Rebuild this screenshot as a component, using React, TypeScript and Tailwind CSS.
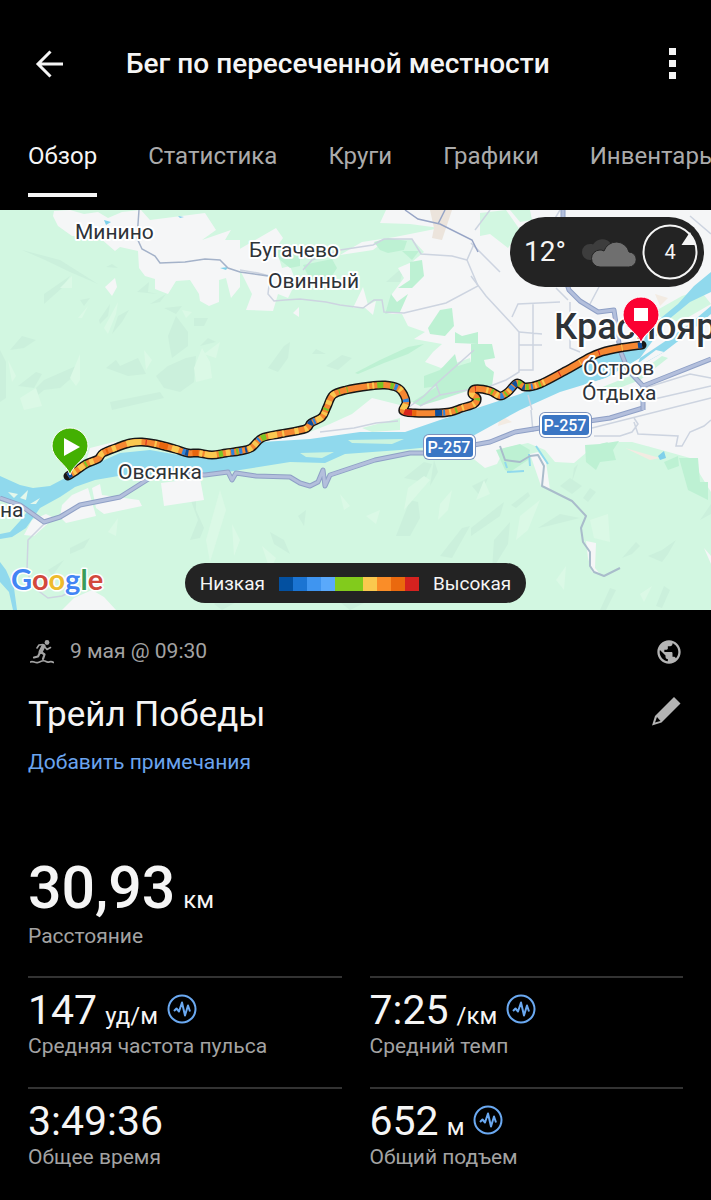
import React, { useState } from 'react';
import { MdPublic } from 'react-icons/md';

const TABS = ['Обзор', 'Статистика', 'Круги', 'Графики', 'Инвентарь'];

const STATS = [
  { value: '147', unit: 'уд/м', label: 'Средняя частота пульса', chart: true },
  { value: '7:25', unit: '/км', label: 'Средний темп', chart: true },
  { value: '3:49:36', unit: '', label: 'Общее время', chart: false },
  { value: '652', unit: 'м', label: 'Общий подъем', chart: true },
];

const URBAN = [
  '54,1 53,6 58,16 72,26 100,28 115,41 120,37 138,41 139,58 145,66 155,69 155,79 168,84 176,71 190,70 199,84 200,91 209,96 219,92 219,70 226,68 231,88 240,77 240,30 225,30 231,20 202,30 216,20 205,3 150,10 141,0 122,2 108,8 98,2 84,4 70,0',
  '105,77 115,68 117,77 112,86',
  '238,40 276,18 283,28 276,38 282,58 290,56 296,72 288,88 278,84 273,101 246,100 252,84 240,60',
  '386,0 380,13 410,14 440,18 395,27 362,32 340,45 373,40 386,30 412,29 424,42 412,52 398,58 404,68 392,84 385,104 402,104 408,116 425,122 414,129 442,134 433,142 425,152 441,158 470,148 474,168 440,178 422,187 404,196 372,188 352,204 330,214 310,222 262,229 250,232 320,231 440,222 470,246 485,258 497,254 505,238 528,233 545,240 555,252 574,253 587,242 600,248 607,246 615,232 632,232 665,241 690,248 711,282 711,0',
  '353,98 363,77 368,95 376,91 373,105 364,97',
  '293,103 299,97 299,107',
  '90,238 118,231 106,242 96,250 86,252',
  '161,273 200,268 204,290 164,296',
  '62,295 72,285 88,278 96,306 66,313 60,307',
  '24,325 32,310 46,304 54,308 34,326',
  '92,278 100,274 102,285 139,290 142,296 104,304 96,298',
  '586,331 596,333 595,358 600,364 592,362 588,348',
  '62,400 74,388 92,380 104,387 116,400',
  '704,338 711,346 711,354',
];

const WOODS = [
  '374,32 388,28 407,31 404,40 388,43 380,40',
  '402,41 419,41 412,50',
  '410,52 422,50 424,66 412,78 398,78 410,70',
  '391,84 397,92 408,84 400,102 385,104',
  '428,118 440,100 452,98 454,116 445,126 430,124',
  '455,122 462,126 478,122 478,134 455,133',
  '273,38 284,40 300,42 300,56 290,58 280,50',
  '303,55 332,49 337,58 328,72 312,74',
  '355,163 380,150 408,137 424,134 408,144 384,153 358,164',
  '424,166 440,160 455,144 458,156 478,150 494,162 492,176 470,180 440,190 420,196 412,192 438,176 424,178',
  '471,134 492,134 495,148 484,150 488,164 471,170',
  '585,235 600,234 619,231 613,240 616,250 600,252 596,260 586,252',
  '679,248 698,248 700,272 708,272 708,290 688,280',
  '664,252 678,246 679,256 668,260',
  '600,244 608,232 600,234',
  '496,240 520,234 530,240 528,250 510,262 505,260',
];

const WOODS_LIGHT = [
  '480,3 506,0 520,20 508,38 490,24 480,26',
  '510,0 530,0 532,10 520,12',
  '362,218 400,208 400,220 372,222',
  '650,104 682,86 700,80 711,94 680,112',
  '586,262 640,240 650,236 620,252',
];

const SHADE = [
  '22,40 60,50 98,74 70,62 45,50',
  '44,84 70,66 62,78 44,94',
  '80,90 90,88 84,96',
  '99,110 110,94 108,106 100,114',
  '112,124 118,106 129,100 122,112',
  '137,82 149,72 148,82 158,84',
  '106,57 112,54 118,58',
  '10,140 22,126 36,130 24,138',
  '28,186 44,170 76,156 78,150 76,164 60,178 44,180 34,188',
  '18,176 36,162 42,164 34,178',
  '106,158 116,150 120,156 138,148 146,164 128,166',
  '156,166 168,156 186,148 196,146 194,172 180,182 164,178',
  '168,126 176,106 188,122 188,136 172,148 170,138',
  '194,108 208,108 204,116 194,116',
  '200,136 208,128 216,132',
  '110,192 160,182 164,188 112,200',
  '150,94 166,84 160,92',
  '164,98 182,96 176,104',
  '0,140 6,152 6,188 0,192',
  '326,156 342,145 352,148 338,160',
  '268,158 284,136 290,132 288,148 278,162',
  '312,144 316,139 326,144',
  '386,72 404,56 400,72',
  '396,326 410,290 418,292 420,308 410,326',
  '404,268 424,252 432,254 424,272',
  '270,322 284,330 290,344 274,334',
  '298,306 306,300 304,316',
  '430,276 434,250 438,262',
  '440,346 462,318 470,316 452,348',
  '190,288 196,280 196,300 204,318 200,328 190,330 198,310',
  '511,295 528,282 530,286 516,298',
  '560,276 570,268 582,276 572,284',
  '583,288 590,278 596,282 588,292',
  '492,360 494,330 510,312 508,334',
  '538,318 560,304 580,308 548,316',
  '622,348 636,332 640,336 632,344',
  '648,346 662,340 676,330 668,344 662,352',
  '471,318 504,292 500,306 471,326',
  '574,258 578,254 572,272',
  '472,276 488,268 480,286',
  '70,338 90,328 84,338 70,344',
  '48,360 64,350 52,366',
  '700,310 711,294 711,304',
  '600,400 610,378 616,380 606,400',
  '656,396 664,376 670,380 662,398',
  '340,392 360,380 378,386 350,400',
  '214,394 236,376 240,390 222,400',
];

const GLOW = [
  '60,78 72,66 72,78',
  '78,108 88,96 82,108',
  '104,118 118,92 116,104 108,124',
  '70,168 80,144 80,170 76,176',
  '20,188 36,178 42,196 24,200',
  '8,150 16,166 12,172',
  '194,158 202,138 210,152 212,168 196,172',
  '182,100 192,102 186,108',
  '144,140 152,150 146,160',
  '204,144 220,132 216,148',
  '408,278 424,266 430,270 404,300',
  '262,336 276,348 270,360',
  '340,284 350,296 344,300',
  '440,294 452,280 448,300 438,310',
  '366,306 380,300 376,314',
  '590,310 608,304 610,332 594,328',
  '520,306 540,290 528,320 516,330',
  '476,290 484,270 490,284',
  '108,322 118,308 116,326',
  '206,330 220,280 226,300 210,352',
  '232,314 240,330 234,346',
  '640,384 652,376 644,392',
  '290,360 300,352 304,370',
  '556,370 566,356 564,380',
];

const ROADS_MINOR = [
  'M240 60 L258 63 L270 66 L268 84 L274 91 L285 90 L300 89 L326 92 L340 95 L363 98 L374 90 L382 90 L384 102 L404 103 L446 93 L478 76 L467 50 L474 34',
  'M303 60 L312 50 L340 40 L373 35 L384 29 L412 29 L421 44 L452 46 L467 50',
  'M405 200 L424 186 L436 174 L474 140 M436 174 L440 185 M420 196 L440 185 L478 178',
  'M471 33 L500 62 M471 66 L486 86 L512 114 L519 122 L519 162 L506 170 L480 180',
  'M512 107 L518 94 L560 92 M533 94 L533 160 L519 160 M519 122 L542 124 M519 135 L542 135',
  'M556 78 L568 90 M570 92 L570 138 L580 142',
  'M528 185 L532 200 M531 200 L533 222',
  'M594 226 L620 226 L632 222 L638 214 L634 208 M634 212 L638 224 L678 226 L676 236 L682 236 L690 222 L704 216 L711 210',
  'M645 178 L690 164 L711 168 M650 190 L711 176 M592 218 L711 188',
  'M475 20 L490 0 M690 6 L711 24 M600 75 L590 94 M560 0 L548 20',
  'M320 222 L354 218 L376 213 L398 211',
  'M44 314 L28 330 L27 360 L32 376 L48 388 L62 386 L82 376',
];

const ROADS_MAIN = [
  'M0 288 L20 295 L44 312 L60 307 L80 295 L120 287 L150 268 L162 264 L205 265 L228 262 L232 270 L236 263 L256 266 L290 267 L300 273 L310 276 L318 272 L323 260 L325 276 L330 265 L345 260 L375 250 L410 243 L430 243 L490 232 L515 222 L540 218 L610 208 L643 198',
  'M563 0 L563 10 M567 74 L569 80 L580 91 L598 102 L614 100 L617 120 L620 140 L628 160 L643 176 L643 200 M643 176 L711 149',
];

const TRACK_POINTS = [
  [68, 266], [76, 261], [86, 254], [98, 249], [103, 243], [118, 237], [130, 233], [142, 232], [156, 234], [175, 239],
  [188, 243], [198, 243], [212, 245], [226, 243], [240, 241], [251, 238], [262, 228], [280, 224], [305, 219], [311, 213],
  [322, 207], [327, 197], [333, 185], [346, 180], [370, 176], [385, 175], [398, 178], [404, 185], [406, 193], [403, 201],
  [415, 203], [437, 203], [450, 202], [462, 198], [474, 194], [477, 188], [472, 184], [475, 179], [490, 181], [500, 186],
  [508, 182], [517, 173], [525, 177], [540, 174], [565, 161], [590, 147], [602, 142], [620, 138], [642, 135],
];

// Catmull-Rom through the GPS points
function smooth(pts: number[][]) {
  let d = `M${pts[0][0]} ${pts[0][1]}`;
  for (let i = 0; i < pts.length - 1; i++) {
    const a = pts[i - 1] || pts[i];
    const b = pts[i];
    const c = pts[i + 1];
    const e = pts[i + 2] || c;
    d += ` C${b[0] + (c[0] - a[0]) / 6} ${b[1] + (c[1] - a[1]) / 6} ${c[0] - (e[0] - b[0]) / 6} ${c[1] - (e[1] - b[1]) / 6} ${c[0]} ${c[1]}`;
  }
  return d;
}

const TRACK = smooth(TRACK_POINTS);

const O = '#f58732';
const D = '#e8660f';
const Y = '#fac850';
const G = '#7ac525';
const B = '#2f83dc';
const N = '#0f4f9c';
const R = '#d8261f';

// [start, length, colour] measured along the track
const PACE: [number, number, string][] = [
  [0, 4, N], [6, 3, Y], [13, 6, Y], [20, 2, G], [25, 4, Y], [37, 5, Y], [45, 2, D], [51, 4, Y],
  [66, 15, Y], [85, 1, R], [94, 2, Y], [99, 8, D], [111, 7, Y], [122, 3, B], [125, 3, N], [132, 6, D],
  [139, 3, Y], [144, 12, Y], [158, 4, G], [165, 4, Y], [170, 3, B], [175, 2, G], [178, 3, B], [184, 2, N],
  [187, 4, Y], [194, 4, Y], [200, 2, B], [204, 5, G], [211, 9, Y], [225, 2, Y], [237, 4, Y], [247, 3, Y],
  [254, 4, N], [259, 2, B], [262, 6, Y], [271, 3, Y], [276, 2, G], [282, 4, Y], [291, 4, Y], [299, 1, G],
  [307, 1, G], [327, 2, Y], [332, 2, Y], [337, 6, G], [350, 3, G], [354, 3, B], [359, 3, Y], [371, 3, B],
  [376, 6, Y], [385, 8, R], [393, 4, D], [415, 7, N], [423, 2, B], [429, 2, Y], [435, 2, G], [442, 2, Y],
  [453, 2, Y], [459, 2, G], [465, 4, Y], [474, 1, R], [485, 2, Y], [490, 2, G], [495, 3, Y], [500, 3, B],
  [505, 2, G], [509, 2, Y], [512, 4, B], [517, 4, N], [522, 3, G], [528, 2, N], [531, 3, G], [536, 2, B],
  [540, 2, Y], [544, 2, G], [548, 2, Y], [566, 1, R], [589, 1, Y], [610, 1, R], [633, 1, Y], [649, 4, N],
];

const SCALE = [
  'bg-[#0350a0]', 'bg-[#1b74d2]', 'bg-[#3f95f0]', 'bg-[#5aa9fb]', 'bg-[#82cb1c]',
  'bg-[#82cb1c]', 'bg-[#fac94e]', 'bg-[#fa8d28]', 'bg-[#ea690e]', 'bg-[#d5221f]',
];

function PlaceLabel({ x, y, size = 21, children }: { x: number; y: number; size?: number; children: React.ReactNode }) {
  return (
    <text x={x} y={y} fontSize={size} fill="#2e3338" stroke="#fff" strokeWidth="4" strokeLinejoin="round" paintOrder="stroke">
      {children}
    </text>
  );
}

function RoadSign({ x, y }: { x: number; y: number }) {
  return (
    <g>
      <rect x={x} y={y} width="53" height="26" rx="6" fill="#7d93bd" />
      <rect x={x + 1} y={y + 1} width="51" height="24" rx="5" fill="#fff" />
      <rect x={x + 3} y={y + 3} width="47" height="20" rx="3" fill="#3b76c4" />
      <text x={x + 26} y={y + 19} fontSize="16" fontWeight="500" fill="#fff" textAnchor="middle">Р-257</text>
    </g>
  );
}

function RouteMap() {
  return (
    <svg
      viewBox="0 0 711 400"
      preserveAspectRatio="xMidYMid slice"
      className="block h-full w-full"
      fontFamily="Roboto, sans-serif"
      role="img"
      aria-label="Карта маршрута"
    >
      <rect width="711" height="400" fill="#d2f7e1" />
      {SHADE.map((p) => <polygon key={p} points={p} fill="#cbf0dc" />)}
      {GLOW.map((p) => <polygon key={p} points={p} fill="#dbf9e6" />)}
      {URBAN.map((p) => <polygon key={p} points={p} fill="#f5f6f7" />)}
      {WOODS_LIGHT.map((p) => <polygon key={p} points={p} fill="#d2f7e1" />)}
      {WOODS.map((p) => <polygon key={p} points={p} fill="#bdf1d3" />)}
      <path d="M430 0 H452 L442 30 L432 28 L434 18 Z" fill="#ece4dc" />
      <path d="M530 244 L538 242 L546 252 L550 280 L541 276 Z" fill="#f5f6f7" />
      <path d="M500 205 L512 212 L498 216 Z M625 238 L660 248 L650 250 Z M655 84 L668 88 L660 96 Z" fill="#f3ebe2" />

      {/* river */}
      <path
        d="M0 266 L20 275 L33 278 L50 276 L67 267 L80 262 L100 252 L120 243 L150 240 L190 247 L240 245 L262 232 L310 229 L360 222 L405 222 L440 210 L471 200 L520 184 L560 166 L590 148 L612 138 L640 134 L656 112 L678 94 L694 76 L711 62 V82 L690 92 L668 110 L640 148 L606 168 L560 182 L520 200 L471 227 L430 237 L400 240 L345 244 L325 253 L290 252 L240 260 L190 268 L130 264 L95 270 L75 277 L60 287 L40 298 L26 318 L12 327 L0 329 V324 L10 322 L20 311 L27 302 L14 292 L0 287 Z"
        fill="#90d9ed"
      />
      <path d="M640 148 L670 128 L692 112 L711 96 V104 L690 122 L664 142 L636 158 Z" fill="#90d9ed" />
      <path d="M8 282 L18 284 L14 288 Z M20 288 L28 280 L26 290 Z M30 294 L40 288 L36 294 Z" fill="#e4f8ec" />
      <path d="M570 180 L606 168 L640 152 L656 140 L664 142 L632 160 L600 178 L560 186 Z" fill="#f5f6f7" />
      <path d="M600 178 L640 162 L662 146 L668 148 L640 170 L604 184 Z" fill="#cdf5de" />
      <path d="M348 230 L404 229 L392 234 L352 233 Z M300 243 L334 242 L322 248 L306 247 Z" fill="#ccf4df" />
      <path d="M0 352 L6 360 L14 378 L17 400 L13 400 L9 382 L0 372" fill="#90d9ed" />
      <path d="M658 246 L664 241 L666 248 L660 250 Z M104 10 L111 12 L106 15 Z M220 58 L228 57 L226 60 Z M178 6 L184 7 L180 8 Z" fill="#7fd0ea" />
      <path d="M505 252 L507 258 M507 262 L524 261 M529 244 L530 256 M536 236 L548 254" fill="none" stroke="#90d9ed" strokeWidth="2" />

      {/* roads */}
      {ROADS_MINOR.map((d) => <path key={d} d={d} fill="none" stroke="#cdd4e0" strokeWidth="1.5" />)}
      <path d="M139 0 L137 28 L142 39 L155 46 L160 53 L185 52 L205 49 L220 50 L228 58 L240 62 L268 66" fill="none" stroke="#a4b2c9" strokeWidth="1.5" />
      <path d="M405 0 L418 9 L440 14 L472 30 L478 42 M445 0 L438 14" fill="none" stroke="#97a5c6" strokeWidth="1.5" />
      <path d="M500 236 L505 250 L520 252 L530 246 L538 245 L544 256 L542 276 L572 291 L586 306 L581 318 L583 332 L590 342 L590 356 L594 362 L604 366 L620 358" fill="none" stroke="#a9bccb" strokeWidth="2" strokeLinejoin="round" />
      {ROADS_MAIN.map((d) => (
        <g key={d} fill="none" strokeLinejoin="round">
          <path d={d} stroke="#8fa0c6" strokeWidth="5" />
          <path d={d} stroke="#b3bfdc" strokeWidth="3" />
        </g>
      ))}

      <PlaceLabel x={75} y={29}>Минино</PlaceLabel>
      <PlaceLabel x={249} y={47}>Бугачево</PlaceLabel>
      <PlaceLabel x={268} y={78}>Овинный</PlaceLabel>
      <PlaceLabel x={118} y={269}>Овсянка</PlaceLabel>
      <PlaceLabel x={0} y={307}>на</PlaceLabel>
      <g fontWeight="500">
        <PlaceLabel x={554} y={129} size={36}>Красноярск</PlaceLabel>
      </g>
      <RoadSign x={423} y={224} />
      <RoadSign x={539} y={202} />

      {/* track */}
      <g fill="none" strokeLinejoin="round">
        <path d={TRACK} stroke="#161616" strokeWidth="9" strokeLinecap="round" />
        <path d={TRACK} stroke={O} strokeWidth="6" />
        {PACE.map(([start, len, color]) => (
          <path
            key={start}
            d={TRACK}
            pathLength={653}
            stroke={color}
            strokeWidth="6"
            strokeDasharray={`${len} 2000`}
            strokeDashoffset={-start}
          />
        ))}
      </g>

      <PlaceLabel x={583} y={165}>О́стров</PlaceLabel>
      <PlaceLabel x={582} y={190}>О́тдыха</PlaceLabel>

      <path d="M70 265 C67 254 52 249 52 236 A18 18 0 0 1 88 236 C88 249 73 254 70 265 Z" fill="#43b002" stroke="#fff" strokeWidth="1" />
      <path d="M64 228 L80 237 L64 246 Z" fill="#fff" />
      <path d="M641 133 C638 122 623 118 623 105 A18 18 0 0 1 659 105 C659 118 644 122 641 133 Z" fill="#fb0132" stroke="#fff" strokeWidth="1" />
      <rect x="634" y="98" width="14" height="13" fill="#fff" />

      <text x="11" y="380" fontFamily="Lato, sans-serif" fontSize="29" fontWeight="700" stroke="#fff" strokeWidth="3" strokeLinejoin="round" paintOrder="stroke">
        <tspan fill="#4285f4">G</tspan>
        <tspan fill="#d2493c">o</tspan>
        <tspan fill="#eebb2c">o</tspan>
        <tspan fill="#4285f4">g</tspan>
        <tspan fill="#3a9c5a">l</tspan>
        <tspan fill="#d2493c">e</tspan>
      </text>
    </svg>
  );
}

function CloudIcon() {
  return (
    <svg width="54" height="30" viewBox="0 0 54 30" aria-hidden="true">
      <path d="M8 23 A8 8 0 0 1 8 7 C10 7 10 7 11 7.500 A10.500 10.500 0 0 1 29 7 V23 Z" fill="#3d3d3d" />
      <path
        d="M18 30 A8.500 8.500 0 0 1 18 13 C19 12.900 20.500 13.200 22 14 A13 13 0 0 1 47 15 A7.500 7.500 0 0 1 46.500 30 Z"
        fill="#6f6f6f"
        stroke="#232323"
        strokeWidth="1"
      />
    </svg>
  );
}

function TrailRunIcon() {
  return (
    <svg width="24" height="24" viewBox="0 0 24 24" fill="none" stroke="currentColor" strokeLinecap="round" strokeLinejoin="round" aria-hidden="true">
      <circle cx="17" cy="2.500" r="2.400" fill="currentColor" stroke="none" />
      <path d="M13.500 6 L10.500 12" strokeWidth="4" />
      <path d="M13 4.500 L9 5 L7 8" strokeWidth="1.600" />
      <path d="M14.500 6.500 L17 9.500 L20.500 7.500" strokeWidth="1.600" />
      <path d="M11 12 L14.500 14.500 L13 19" strokeWidth="2.200" />
      <path d="M10 12.500 L8 16.500 L4 17.500" strokeWidth="2.200" />
      <path d="M0.500 22 C3 20.500 5 23.500 8 22.500 S13 19.500 16 21.500 S20 20 23.500 22.500" strokeWidth="1.600" />
    </svg>
  );
}

function PulseIcon() {
  return (
    <svg width="30" height="30" viewBox="0 0 30 30" fill="none" stroke="#6ba9f1" aria-hidden="true">
      <circle cx="15" cy="15" r="13.500" strokeWidth="2" />
      <path d="M7 17 L9.500 14.500 L12 17.500 L15 8.500 L18 21.500 L21 11.500 L23 17.500" strokeWidth="2" strokeLinejoin="round" />
    </svg>
  );
}

export default function App() {
  const [tab, setTab] = useState('Обзор');

  return (
    <div className="min-h-screen overflow-hidden bg-black font-[Roboto,sans-serif] text-[#f5f5f5]">
      <header className="flex h-32 items-center pr-8 pl-[35px]">
        <button aria-label="Назад">
          <svg width="28" height="28" viewBox="0 0 28 28" fill="none" stroke="currentColor" strokeWidth="3">
            <path d="M28 14 H3 M15.500 1.500 L3 14 L15.500 26.500" />
          </svg>
        </button>
        <h1 className="ml-[63px] flex-1 text-[28px] leading-8 font-medium">Бег по пересеченной местности</h1>
        <button aria-label="Меню">
          <svg width="14" height="32" viewBox="0 0 14 32" fill="currentColor">
            <rect x="4" width="7" height="7" />
            <rect x="4" y="12" width="7" height="7" />
            <rect x="4" y="24" width="7" height="7" />
          </svg>
        </button>
      </header>

      <nav className="flex h-[82px] gap-[51px] overflow-hidden px-7">
        {TABS.map((t) => (
          <button
            key={t}
            onClick={() => setTab(t)}
            className={`h-[69px] shrink-0 border-b-4 pb-[10px] text-2xl ${
              tab === t ? 'border-[#f5f5f5]' : 'border-transparent text-[#ababab]'
            }`}
          >
            {t}
          </button>
        ))}
      </nav>

      <section className="relative h-[400px] overflow-hidden">
        <RouteMap />
        <div className="absolute top-[7px] right-[7px] flex h-[70px] items-center rounded-full bg-[#232323] pr-[6px] pl-[14px]">
          <span className="text-[28px]">12°</span>
          <span className="mr-[6px] ml-4"><CloudIcon /></span>
          <span className="relative flex h-14 w-14 items-center justify-center text-xl">
            <svg className="absolute inset-0" width="56" height="56" viewBox="0 0 56 56" aria-hidden="true">
              <circle cx="28" cy="28" r="26.500" fill="none" stroke="#f5f5f5" strokeWidth="2" />
              <path d="M48 8 L39.500 21 H54 Z" fill="#f5f5f5" />
            </svg>
            4
          </span>
        </div>
        <div className="absolute inset-x-0 bottom-[7px] flex justify-center">
          <div className="flex h-10 items-center gap-[14px] rounded-full bg-[#232323] px-[15px] pt-[2px] text-[19px]">
            <span>Низкая</span>
            <span className="flex">
              {SCALE.map((c, i) => <i key={i} className={`h-[14px] w-[14px] ${c}`} />)}
            </span>
            <span>Высокая</span>
          </div>
        </div>
      </section>

      <main className="px-7">
        <div className="flex h-[84px] items-center text-[21px] text-[#a3a3a3]">
          <span className="ml-[2px]"><TrailRunIcon /></span>
          <span className="ml-4 flex-1">9 мая @ 09:30</span>
          <MdPublic size={28} color="#b4b4b4" aria-label="Доступно всем" />
        </div>
        <div className="flex items-start">
          <h2 className="flex-1 text-[35px] leading-[42px]">Трейл Победы</h2>
          <button aria-label="Изменить" className="mt-[2px] mr-[2px]">
            <svg width="30" height="30" viewBox="0 0 30 30" fill="#b4b4b4">
              <path d="M23 1 L29.500 7.500 L10.500 26.500 L1 29.500 L4 20 Z" />
              <path d="M4 26.500 L6 21 L9.500 25 Z" fill="#000" />
            </svg>
          </button>
        </div>
        <a href="#notes" className="mt-3 block text-[21px] leading-7 text-[#6ba4ee]">Добавить примечания</a>

        <div className="mt-20">
          <div className="flex h-16 items-baseline">
            <span className="text-[59px] leading-[64px] font-medium">30,93</span>
            <span className="ml-2 text-2xl">км</span>
          </div>
          <p className="mt-[2px] text-[21px] leading-7 text-[#a3a3a3]">Расстояние</p>
        </div>

        <div className="mt-[26px] grid grid-cols-2 gap-x-7">
          {STATS.map((s) => (
            <div key={s.label} className="h-[111px] border-t-2 border-[#333] pt-2">
              <div className="flex h-[46px] items-baseline">
                <span className="text-[41px] leading-[48px]">{s.value}</span>
                {s.unit && <span className="ml-2 text-2xl">{s.unit}</span>}
                {s.chart && <span className="ml-[9px] self-center"><PulseIcon /></span>}
              </div>
              <p className="text-[21px] leading-7 text-[#a3a3a3]">{s.label}</p>
            </div>
          ))}
        </div>
      </main>
    </div>
  );
}
